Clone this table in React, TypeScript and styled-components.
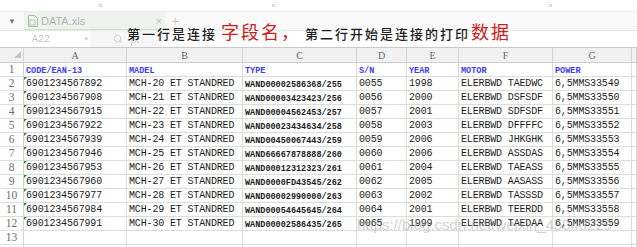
import React, { FC } from 'react'
import styled, { createGlobalStyle } from 'styled-components'
import { Search } from 'lucide-react'

const GlobalStyle = createGlobalStyle`
  html, body {
    margin: 0;
    padding: 0;
    background: #fff;
    overflow: hidden;
  }
`

const COLS = [24, 103, 116, 114, 50, 52, 94, 79]
const LETTERS = ['A', 'B', 'C', 'D', 'E', 'F', 'G']
const FIELDS = ['CODE/EAN-13', 'MADEL', 'TYPE', 'S/N', 'YEAR', 'MOTOR', 'POWER']

const CODES = [
  '6901234567892',
  '6901234567908',
  '6901234567915',
  '6901234567922',
  '6901234567939',
  '6901234567946',
  '6901234567953',
  '6901234567960',
  '6901234567977',
  '6901234567984',
  '6901234567991',
]
const TYPES = [
  'WAND00002586368/255',
  'WAND00003423423/256',
  'WAND00004562453/257',
  'WAND00023434634/258',
  'WAND00450067443/259',
  'WAND66667878888/260',
  'WAND00012312323/261',
  'WAND0000FD43545/262',
  'WAND00002990000/263',
  'WAND00054645645/264',
  'WAND00002586435/265',
]
const YEARS = ['1998', '2000', '2001', '2003', '2006', '2006', '2004', '2005', '2002', '2001', '1999']
const MOTORS = ['TAEDWC', 'DSFSDF', 'SDFSDF', 'DFFFFC', 'JHKGHK', 'ASSDAS', 'TAEASS', 'AASASS', 'TASSSD', 'TEERDD', 'TAEDAA']

const ROWS = CODES.map((code, i) => [
  code,
  `MCH-${20 + i} ET STANDRED`,
  TYPES[i],
  `00${55 + i}`,
  YEARS[i],
  `ELERBWD ${MOTORS[i]}`,
  `6,5MMS${33549 + i}`,
])

const Page = styled.div`
  position: relative;
  width: 637px;
  height: 247px;
  overflow: hidden;
  background: #fff;
  font-family: 'Liberation Sans', 'Noto Sans CJK SC', sans-serif;
`

const TopStrip = styled.div`
  height: 12px;
  display: flex;
  align-items: center;
  border-bottom: 1px solid #ececec;
  box-sizing: border-box;
`

const WinMark = styled.span<{ $left: number }>`
  margin-left: ${(p) => p.$left}px;
  width: 3px;
  height: 3px;
  border: 1px solid #d6d6d6;
  box-sizing: border-box;
`

const TabBar = styled.div`
  height: 19px;
  display: flex;
  align-items: stretch;
  background: #f9f9f9;
  border-bottom: 1px solid #e3e9e3;
  box-sizing: border-box;
`

const TabCaret = styled.div`
  width: 24px;
  display: flex;
  align-items: center;
  justify-content: center;
  color: #777;
  font-size: 8px;
`

const Tab = styled.div`
  width: 141px;
  display: flex;
  align-items: center;
  padding: 0 3px;
  box-sizing: border-box;
  background: #eef3ee;
  border-bottom: 1px solid #cfe3cf;
  color: #b4b4b4;
  font-size: 11px;
  gap: 3px;
`

const TabName = styled.span`
  flex: 1;
`

const TabClose = styled.span`
  color: #c4c4c4;
  font-size: 11px;
`

const TabAdd = styled.span`
  margin-left: 6px;
  align-self: center;
  color: #cdcdcd;
  font-size: 14px;
`

const FormulaBar = styled.div`
  height: 17px;
  display: flex;
  border-bottom: 1px solid #c9c9c9;
  box-sizing: border-box;
`

const NameBox = styled.div`
  width: 90px;
  display: flex;
  align-items: center;
  justify-content: space-between;
  padding: 0 2px 0 32px;
  box-sizing: border-box;
  color: #c3c3c3;
  font-family: 'Liberation Mono', monospace;
  font-size: 10px;
`

const SmallCaret = styled.span`
  font-size: 6px;
  color: #c8c8c8;
`

const FxBox = styled.div`
  width: 72px;
  display: flex;
  align-items: center;
  justify-content: center;
  gap: 8px;
  background: #f6f6f6;
  color: #cacaca;
`

const Fx = styled.span`
  font-family: 'Liberation Serif', serif;
  font-style: italic;
  font-size: 12px;
`

const Title = styled.div`
  position: absolute;
  left: 127px;
  top: 18px;
  display: flex;
  align-items: baseline;
  white-space: nowrap;
  font-family: 'Noto Sans CJK SC', sans-serif;
`

const Plain = styled.span<{ $gap?: number }>`
  margin-left: ${(p) => p.$gap ?? 0}px;
  font-size: 13px;
  font-weight: 500;
  letter-spacing: 2px;
  color: #1e1e1e;
`

const Accent = styled.span<{ $gap?: number }>`
  margin-left: ${(p) => p.$gap ?? 0}px;
  font-size: 18px;
  letter-spacing: 2px;
  color: #c9211c;
`

const Sheet = styled.div`
  display: grid;
  grid-template-columns: ${COLS.map((c) => `${c}px`).join(' ')} 1fr;
  grid-auto-rows: 14px;
  grid-template-rows: 15px;
`

const HeadCell = styled.div`
  position: relative;
  display: flex;
  align-items: center;
  justify-content: center;
  background: #f1f1f1;
  border-right: 1px solid #d2d2d2;
  border-bottom: 1px solid #cdcdcd;
  box-sizing: border-box;
  color: #6a6a6a;
  font-family: 'Liberation Serif', serif;
  font-size: 10px;
`

const CornerMark = styled.span`
  position: absolute;
  right: 2px;
  bottom: 4px;
  width: 0;
  height: 0;
  border-left: 7px solid transparent;
  border-bottom: 7px solid #c4c4c4;
`

const RowNum = styled.div`
  display: flex;
  align-items: flex-end;
  justify-content: center;
  padding-bottom: 1px;
  background: #fff;
  border-right: 1px solid #d2d2d2;
  border-bottom: 1px solid #dedede;
  box-sizing: border-box;
  color: #6e6e6e;
  font-family: 'Liberation Serif', serif;
  font-size: 11.5px;
  line-height: 1;
`

type CellKind = 'field' | 'data' | 'type'

const Cell = styled.div<{ $kind: CellKind; $flag?: boolean }>`
  position: relative;
  display: flex;
  align-items: flex-end;
  padding: 0 0 1px 2px;
  border-right: 1px solid #dcdcdc;
  border-bottom: 1px solid #dcdcdc;
  box-sizing: border-box;
  white-space: nowrap;
  line-height: 1;
  font-family: 'Liberation Mono', monospace;
  font-size: ${(p) => (p.$kind === 'data' ? '10px' : '8.5px')};
  letter-spacing: ${(p) => (p.$kind === 'data' ? '-0.15px' : '0')};
  font-weight: ${(p) => (p.$kind === 'data' ? 400 : 700)};
  color: ${(p) => (p.$kind === 'field' ? '#3b3bf5' : '#1c1c1c')};

  ${(p) =>
    p.$flag &&
    `
    &::before {
      content: '';
      position: absolute;
      left: 0;
      top: 0;
      border-top: 3px solid #1e8c2a;
      border-right: 3px solid transparent;
    }
  `}
`

const Watermark = styled.div`
  position: absolute;
  left: 357px;
  top: 216px;
  font-family: 'Liberation Sans', sans-serif;
  font-size: 15px;
  color: rgba(150, 150, 150, 0.45);
  white-space: nowrap;
  pointer-events: none;
`

const FileIcon: FC = () => (
  <svg width='11' height='12' viewBox='0 0 11 12'>
    <path d='M1.5 0.5h6l3 3v8h-9z' fill='#f4f8f4' stroke='#9fc39f' />
    <rect x='3' y='5' width='5' height='5' fill='none' stroke='#a8c8a8' />
  </svg>
)

const App: FC = () => {
  return (
    <>
      <GlobalStyle />
      <Page>
        <TopStrip>
          <WinMark $left={99} />
          <WinMark $left={170} />
          <WinMark $left={274} />
        </TopStrip>
        <TabBar>
          <TabCaret>▼</TabCaret>
          <Tab>
            <FileIcon />
            <TabName>DATA.xls</TabName>
            <TabClose>×</TabClose>
          </Tab>
          <TabAdd>+</TabAdd>
        </TabBar>
        <FormulaBar>
          <NameBox>
            A22
            <SmallCaret>▼</SmallCaret>
          </NameBox>
          <FxBox>
            <Search size={10} strokeWidth={2} />
            <Fx>fx</Fx>
          </FxBox>
        </FormulaBar>

        <Title>
          <Plain>第一行是连接</Plain>
          <Accent $gap={4}>字段名，</Accent>
          <Plain $gap={4}>第二行开始是连接的打印</Plain>
          <Accent $gap={1}>数据</Accent>
        </Title>

        <Sheet>
          <HeadCell>
            <CornerMark />
          </HeadCell>
          {LETTERS.map((l) => (
            <HeadCell key={l}>{l}</HeadCell>
          ))}
          <HeadCell />

          <RowNum>1</RowNum>
          {FIELDS.map((f) => (
            <Cell key={f} $kind='field'>
              {f}
            </Cell>
          ))}
          <Cell $kind='data' />

          {ROWS.map((row, i) => (
            <React.Fragment key={row[0]}>
              <RowNum>{i + 2}</RowNum>
              {row.map((v, j) => (
                <Cell key={j} $kind={j === 2 ? 'type' : 'data'} $flag={j === 0}>
                  {v}
                </Cell>
              ))}
              <Cell $kind='data' />
            </React.Fragment>
          ))}

          {['13', ''].map((n) => (
            <React.Fragment key={n || 'next'}>
              <RowNum>{n}</RowNum>
              {LETTERS.map((l) => (
                <Cell key={l} $kind='data' />
              ))}
              <Cell $kind='data' />
            </React.Fragment>
          ))}
        </Sheet>

        <Watermark>https://blog.csdn.net/weixin_45040229</Watermark>
      </Page>
    </>
  )
}

export default App
